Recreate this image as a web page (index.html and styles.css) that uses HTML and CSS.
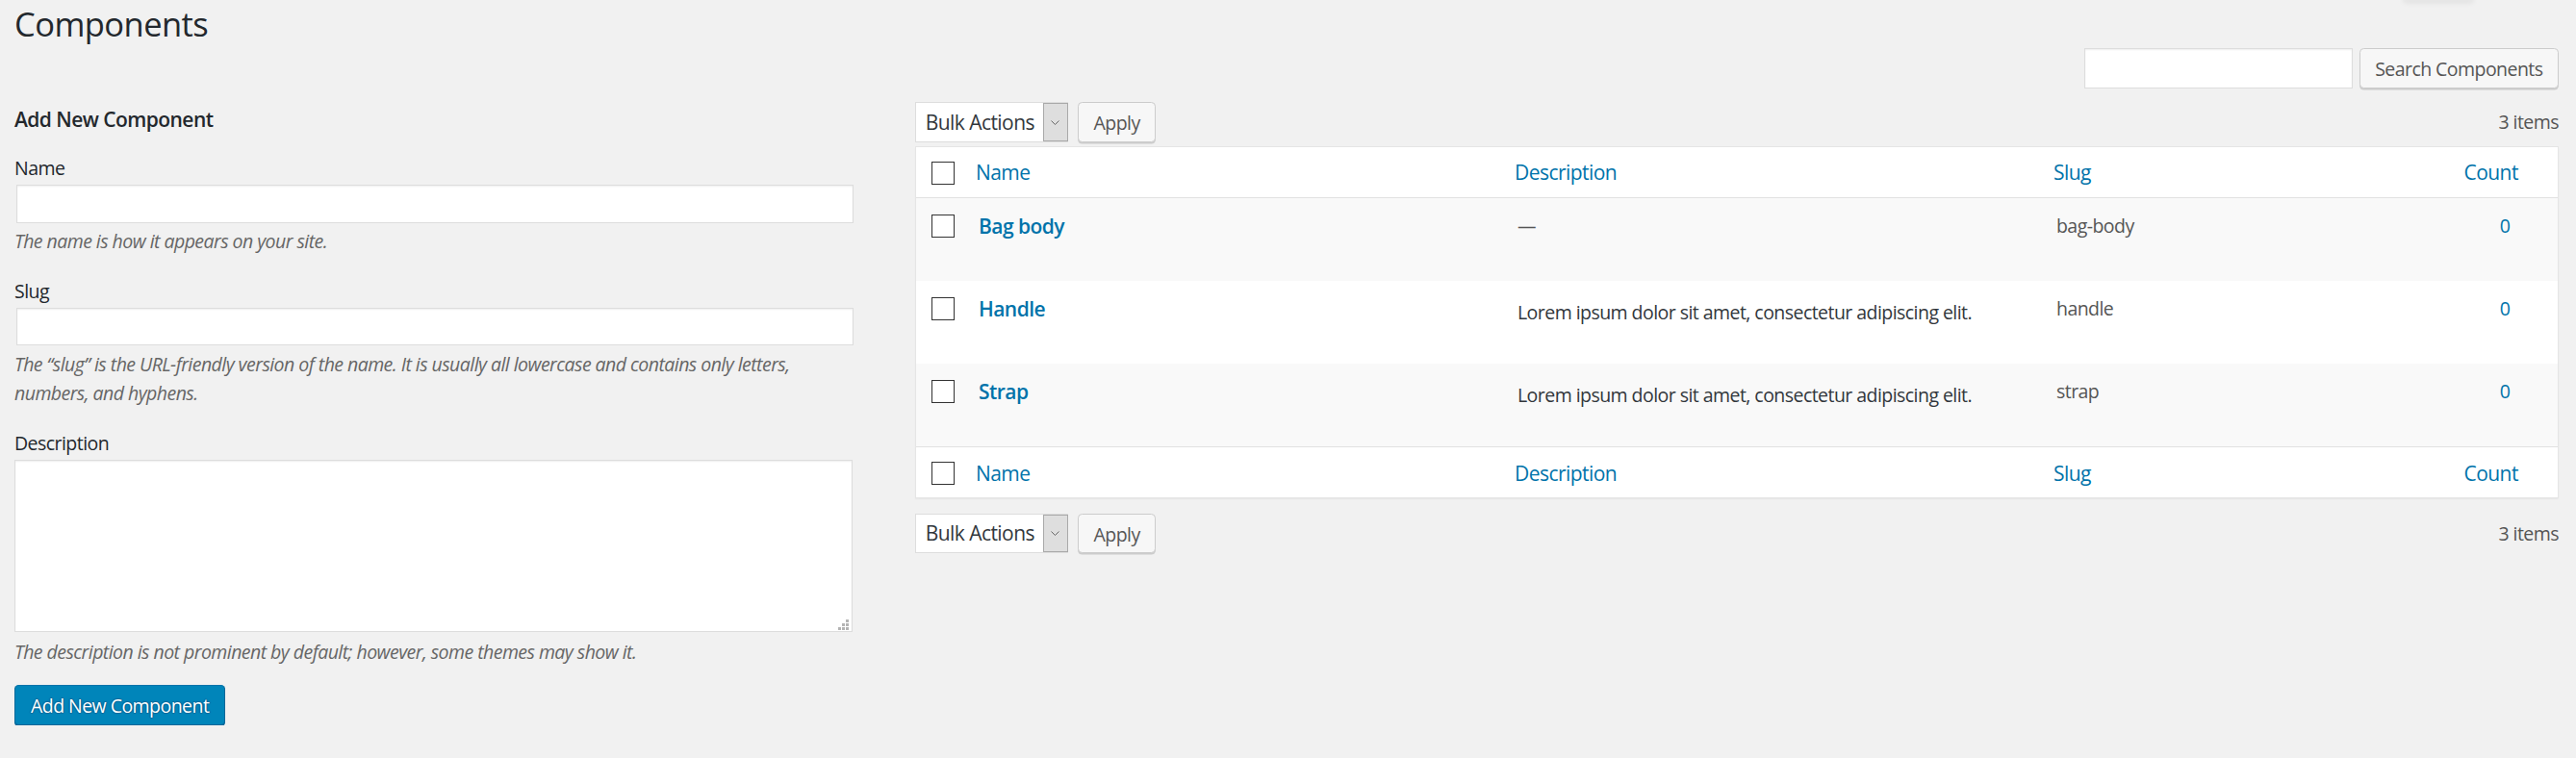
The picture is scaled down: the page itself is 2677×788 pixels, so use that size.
FILE: index.html
```html
<!DOCTYPE html>
<html lang="en">
<head>
<meta charset="utf-8">
<title>Components</title>
<link rel="stylesheet" href="styles.css">
</head>
<body>
<div class="wrap">
  <header class="title-row">
    <h1 class="page-title">Components</h1>
    <div class="screen-meta-tab"></div>
  </header>

  <form class="search-form">
    <input type="search" class="search-input" aria-label="Search Components">
    <button type="button" class="button">Search Components</button>
  </form>

  <div class="col-container">
    <div class="col-left">
      <form class="add-form">
        <h2 class="form-title">Add New Component</h2>
        <div class="form-field">
          <label class="field-label" for="tag-name">Name</label>
          <input type="text" id="tag-name" class="text-input">
          <p class="hint">The name is how it appears on your site.</p>
        </div>
        <div class="form-field">
          <label class="field-label" for="tag-slug">Slug</label>
          <input type="text" id="tag-slug" class="text-input">
          <p class="hint">The “slug” is the URL-friendly version of the name. It is usually all lowercase and contains only letters, numbers, and hyphens.</p>
        </div>
        <div class="form-field">
          <label class="field-label" for="tag-description">Description</label>
          <div class="textarea-box">
            <textarea id="tag-description" class="text-area"></textarea>
            <svg class="grip" width="11" height="11" viewBox="0 0 11 11" aria-hidden="true"><g fill="#b4b4b4"><rect x="8" y="0" width="3" height="3"/><rect x="4" y="4" width="3" height="3"/><rect x="8" y="4" width="3" height="3"/><rect x="0" y="8" width="3" height="3"/><rect x="4" y="8" width="3" height="3"/><rect x="8" y="8" width="3" height="3"/></g></svg>
          </div>
          <p class="hint hint-after-area">The description is not prominent by default; however, some themes may show it.</p>
        </div>
        <div class="submit-row">
          <button type="button" class="button button-primary">Add New Component</button>
        </div>
      </form>
    </div>

    <div class="col-right">
      <div class="tablenav">
        <div class="bulk-actions">
          <div class="select-wrap">
            <select class="bulk-select" aria-label="Bulk Actions"><option>Bulk Actions</option></select>
            <span class="select-arrow"><svg width="9" height="5" viewBox="0 0 9 5" aria-hidden="true"><polyline points="0.5,0.5 4.5,4.5 8.5,0.5" fill="none" stroke="#666" stroke-width="1"/></svg></span>
          </div>
          <button type="button" class="button">Apply</button>
        </div>
        <div class="displaying-num">3 items</div>
      </div>

      <table class="list-table">
        <colgroup>
          <col class="w-cb"><col class="w-name"><col class="w-desc"><col class="w-slug"><col class="w-count">
        </colgroup>
        <thead>
          <tr>
            <td class="check-column"><input type="checkbox" class="checkbox" aria-label="Select All"></td>
            <th><a class="sort-link" href="#">Name</a></th>
            <th><a class="sort-link" href="#">Description</a></th>
            <th><a class="sort-link" href="#">Slug</a></th>
            <th class="th-count"><a class="sort-link" href="#">Count</a></th>
          </tr>
        </thead>
        <tbody>
          <tr>
            <td class="check-column"><input type="checkbox" class="checkbox" aria-label="Select Bag body"></td>
            <td><a class="row-title" href="#">Bag body</a></td>
            <td><span class="dash">—</span></td>
            <td>bag-body</td>
            <td class="column-count"><a class="count-link" href="#">0</a></td>
          </tr>
          <tr>
            <td class="check-column"><input type="checkbox" class="checkbox" aria-label="Select Handle"></td>
            <td><a class="row-title" href="#">Handle</a></td>
            <td><p class="desc-text">Lorem ipsum dolor sit amet, consectetur adipiscing elit.</p></td>
            <td>handle</td>
            <td class="column-count"><a class="count-link" href="#">0</a></td>
          </tr>
          <tr>
            <td class="check-column"><input type="checkbox" class="checkbox" aria-label="Select Strap"></td>
            <td><a class="row-title" href="#">Strap</a></td>
            <td><p class="desc-text">Lorem ipsum dolor sit amet, consectetur adipiscing elit.</p></td>
            <td>strap</td>
            <td class="column-count"><a class="count-link" href="#">0</a></td>
          </tr>
        </tbody>
        <tfoot>
          <tr>
            <td class="check-column"><input type="checkbox" class="checkbox" aria-label="Select All"></td>
            <th><a class="sort-link" href="#">Name</a></th>
            <th><a class="sort-link" href="#">Description</a></th>
            <th><a class="sort-link" href="#">Slug</a></th>
            <th class="th-count"><a class="sort-link" href="#">Count</a></th>
          </tr>
        </tfoot>
      </table>

      <div class="tablenav tablenav-bottom">
        <div class="bulk-actions">
          <div class="select-wrap">
            <select class="bulk-select" aria-label="Bulk Actions"><option>Bulk Actions</option></select>
            <span class="select-arrow"><svg width="9" height="5" viewBox="0 0 9 5" aria-hidden="true"><polyline points="0.5,0.5 4.5,4.5 8.5,0.5" fill="none" stroke="#666" stroke-width="1"/></svg></span>
          </div>
          <button type="button" class="button">Apply</button>
        </div>
        <div class="displaying-num">3 items</div>
      </div>
    </div>
  </div>
</div>
</body>
</html>
```

FILE: styles.css
```css
* { box-sizing: border-box; }

html, body { margin: 0; padding: 0; }

body {
  background: #f1f1f1;
  color: #444;
  font-family: "Open Sans", "Noto Sans", "Liberation Sans", sans-serif;
  font-size: 19.5px;
  line-height: 30px;
  letter-spacing: -0.028em;
}

input, button, select, textarea { letter-spacing: inherit; }

.wrap { padding: 0 18px 0 15px; }

/* ---------- title ---------- */
.title-row {
  display: flex;
  justify-content: space-between;
  align-items: flex-start;
  height: 46px;
}
.page-title {
  margin: 0;
  padding-top: 1.5px;
  font-size: 34.5px;
  font-weight: 400;
  line-height: 45px;
  color: #23282d;
}
.screen-meta-tab {
  width: 76px;
  height: 6px;
  margin: -2px 87px 0 0;
  background: rgba(0, 0, 0, 0.05);
  border-radius: 0 0 8px 8px;
  filter: blur(2px);
}

/* ---------- search ---------- */
.search-form {
  display: flex;
  justify-content: flex-end;
  align-items: flex-start;
  gap: 7px;
  margin: 4.3px 0 0;
  height: 43px;
}
.search-input {
  width: 278.4px;
  height: 41.4px;
  margin: 0;
  padding: 0 8px;
  border: 1px solid #ddd;
  background: #fff;
  box-shadow: inset 0 1px 2px rgba(0, 0, 0, 0.07);
  font: inherit;
  outline: none;
}

/* ---------- buttons ---------- */
.button {
  display: inline-block;
  height: 41.4px;
  margin: 0;
  padding: 2px 15.5px 0;
  font-family: inherit;
  font-size: 19.5px;
  line-height: 37.4px;
  color: #555;
  background: #f7f7f7;
  border: 1px solid #ccc;
  border-radius: 4.5px;
  box-shadow: 0 1.5px 0 #ccc;
  white-space: nowrap;
  cursor: pointer;
}
.submit-row { display: flex; margin-top: 18.8px; }
.button-primary {
  height: 41.8px;
  padding: 2px 16px 0;
  background: #0085ba;
  border-color: #0073aa #006799 #006799;
  box-shadow: 0 1.5px 0 #006799;
  color: #fff;
  text-shadow: 0 -1px 1px #006799, 1px 0 1px #006799, 0 1px 1px #006799, -1px 0 1px #006799;
}

/* ---------- columns ---------- */
.col-container {
  display: grid;
  grid-template-columns: 925.4px 1fr;
  margin-top: 12.7px;
}
.col-left { padding-right: 9px; }
.col-right { padding-left: 10.6px; }

/* ---------- add form ---------- */
.add-form { margin: 0; }
.form-title {
  margin: 5px 0 0;
  font-size: 21px;
  font-weight: 600;
  line-height: 27px;
  color: #23282d;
}
.form-field { margin-top: 23px; }
.field-label {
  display: block;
  margin-bottom: 4.2px;
  font-size: 19.5px;
  line-height: 27px;
  color: #23282d;
}
.text-input {
  display: block;
  width: 870px;
  height: 39.4px;
  margin: 0 1.5px;
  padding: 3px 8px;
  border: 1px solid #ddd;
  background: #fff;
  box-shadow: inset 0 1px 2px rgba(0, 0, 0, 0.07);
  font: inherit;
  outline: none;
}
.hint {
  width: 95%;
  margin: 4.2px 0 0;
  font-size: 19.5px;
  font-style: italic;
  line-height: 30px;
  color: #666;
}
.hint-after-area { margin-top: 6.1px; }
.textarea-box {
  position: relative;
  width: 870.5px;
  height: 179.6px;
}
.text-area {
  display: block;
  width: 100%;
  height: 100%;
  margin: 0;
  resize: none;
  border: 1px solid #ddd;
  background: #fff;
  box-shadow: inset 0 1px 2px rgba(0, 0, 0, 0.07);
  font: inherit;
  outline: none;
}
.grip { position: absolute; right: 4px; bottom: 2.5px; }

/* ---------- table nav ---------- */
.tablenav {
  display: flex;
  justify-content: space-between;
  align-items: flex-start;
  height: 46.3px;
  padding-top: 0.3px;
}
.tablenav-bottom { margin-top: 15.7px; }
.bulk-actions { display: flex; align-items: flex-start; gap: 10px; }
.select-wrap {
  display: flex;
  width: 159px;
  height: 41.7px;
  border: 1px solid #ddd;
  background: #fff;
}
.bulk-select {
  flex: 1;
  min-width: 0;
  margin: 0;
  padding: 0 0 0 9.7px;
  border: 0;
  background: transparent;
  -webkit-appearance: none;
  appearance: none;
  font-family: inherit;
  font-size: 21px;
  color: #32373c;
  outline: none;
}
.select-arrow {
  display: flex;
  align-items: center;
  justify-content: center;
  width: 26px;
  margin-right: -1px;
  background: #dedede;
  border: 1px solid #a9a9a9;
}
.displaying-num {
  font-size: 19.5px;
  line-height: 42px;
  color: #555;
}

/* ---------- list table ---------- */
.list-table {
  width: 100%;
  table-layout: fixed;
  border-collapse: separate;
  border-spacing: 0;
  background: #fff;
  border: 1px solid #e5e5e5;
  box-shadow: 0 1.5px 1.5px rgba(0, 0, 0, 0.04);
}
.w-cb { width: 50px; }
.w-name { width: 560px; }
.w-desc { width: 560px; }
.w-slug { width: 426px; }
.w-count { width: 110px; }

.list-table th,
.list-table td {
  text-align: left;
  vertical-align: top;
}
.list-table thead th,
.list-table tfoot th {
  padding: 11.2px 12px 11px;
  font-size: 21px;
  font-weight: 400;
  line-height: 30px;
}
.list-table tfoot th { padding-bottom: 10px; }
.list-table thead tr > * { border-bottom: 1px solid #e1e1e1; }
.list-table tfoot tr > * { border-top: 1px solid #e1e1e1; }
.list-table .th-count { padding-left: 12.5px; }

.sort-link,
.row-title,
.count-link {
  color: #0073aa;
  text-decoration: none;
}

.list-table .check-column { padding: 15px 0 0 16.3px; }
.list-table tbody .check-column { padding-top: 17px; }

.checkbox {
  -webkit-appearance: none;
  appearance: none;
  display: block;
  width: 23.4px;
  height: 23.4px;
  margin: 0;
  border: 1px solid #333;
  border-radius: 0;
  background: #fff;
}

.list-table tbody td {
  height: 86px;
  padding: 13.8px 15px 0;
  font-size: 19.5px;
  line-height: 30px;
  color: #555;
}
.list-table tbody tr:nth-child(odd) { background: #f9f9f9; }
.row-title {
  font-size: 21px;
  font-weight: 600;
}
.desc-text {
  margin: 3.4px 0 0;
  color: #32373c;
}
.list-table .column-count { text-align: center; padding-left: 0; padding-right: 0; }
```
